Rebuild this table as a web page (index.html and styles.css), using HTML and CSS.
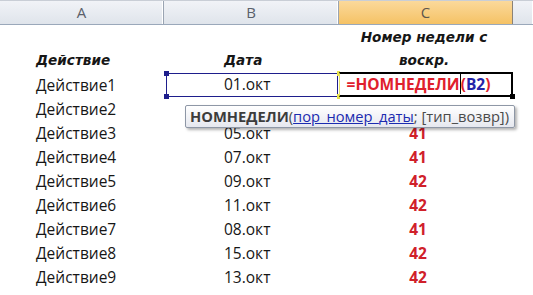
FILE: index.html
```html
<!DOCTYPE html>
<html lang="ru">
<head>
<meta charset="utf-8">
<link rel="stylesheet" href="styles.css">
</head>
<body>
<div class="wrap">
  <div class="colhead">
    <div class="ch">A</div>
    <div class="ch">B</div>
    <div class="ch ch-sel">C</div>
    <div class="ch ch-rest"></div>
  </div>
  <div class="sheet">
    <div class="cell hd hd-a">Действие</div>
    <div class="cell hd hd-b">Дата</div>
    <div class="cell hd hd-c">Номер недели с<br>воскр.</div>
    <div class="cell"></div>

    <div class="cell ca">Действие1</div>
    <div class="cell cb sel-b"><span class="h h-tl"></span><span class="h h-bl"></span><span class="h h-tr"></span><span class="h h-br"></span>01.окт</div>
    <div class="cell cc active"><span class="f-red">=НОМНЕДЕЛИ</span><span class="caret"></span><span class="f-red">(</span><span class="f-blue">B2</span><span class="f-red">)</span><span class="fill"></span></div>
    <div class="cell"></div>

    <div class="cell ca">Действие2</div>
    <div class="cell cb"></div>
    <div class="cell cc num"></div>
    <div class="cell"></div>

    <div class="cell ca">Действие3</div>
    <div class="cell cb">05.окт</div>
    <div class="cell cc num">41</div>
    <div class="cell"></div>

    <div class="cell ca">Действие4</div>
    <div class="cell cb">07.окт</div>
    <div class="cell cc num">41</div>
    <div class="cell"></div>

    <div class="cell ca">Действие5</div>
    <div class="cell cb">09.окт</div>
    <div class="cell cc num">42</div>
    <div class="cell"></div>

    <div class="cell ca">Действие6</div>
    <div class="cell cb">11.окт</div>
    <div class="cell cc num">42</div>
    <div class="cell"></div>

    <div class="cell ca">Действие7</div>
    <div class="cell cb">08.окт</div>
    <div class="cell cc num">41</div>
    <div class="cell"></div>

    <div class="cell ca">Действие8</div>
    <div class="cell cb">15.окт</div>
    <div class="cell cc num">42</div>
    <div class="cell"></div>

    <div class="cell ca">Действие9</div>
    <div class="cell cb">13.окт</div>
    <div class="cell cc num">42</div>
    <div class="cell"></div>
  </div>
  <div class="tip"><b>НОМНЕДЕЛИ</b>(<span class="tip-link">пор_номер_даты</span>; [тип_возвр])</div>
</div>
</body>
</html>
```
FILE: styles.css
```css
html, body {
  margin: 0;
  padding: 0;
  background: #ffffff;
  overflow: hidden;
}
.wrap {
  position: relative;
  width: 533px;
  height: 295px;
  font-family: "Open Sans", "Liberation Sans", sans-serif;
}
.colhead {
  display: grid;
  grid-template-columns: 164px 175px 174px 1fr;
  border-top: 1px solid #c9ced6;
  border-bottom: 1px solid #9aa8ba;
  box-sizing: border-box;
  height: 25px;
}
.ch {
  background: linear-gradient(#f1f3f7, #dfe4eb);
  border-right: 1px solid #9aa4b2;
  box-shadow: inset -1px 0 0 #ffffff;
  color: #5a606a;
  font-size: 15px;
  line-height: 23px;
  text-align: center;
}
.ch-sel {
  background: linear-gradient(#fbd99b, #f5c265);
  color: #5e564c;
  border-right: 1px solid #8a8278;
  box-shadow: none;
}
.ch-rest { border-right: none; }
.sheet {
  display: grid;
  grid-template-columns: 164px 175px 174px 1fr;
  grid-template-rows: 48px repeat(9, 24px);
}
.cell {
  position: relative;
  font-size: 15.5px;
  line-height: 24px;
  color: #161616;
  white-space: nowrap;
  box-sizing: border-box;
}
.hd {
  font-family: "DejaVu Sans", sans-serif;
  font-weight: bold;
  font-style: italic;
  font-size: 13.6px;
  line-height: 23px;
  display: flex;
  align-items: flex-end;
  padding-bottom: 1px;
}
.hd-a { padding-left: 36px; }
.hd-b { padding-left: 60px; }
.hd-c { justify-content: center; text-align: center; padding-right: 4px; }
.ca { padding-left: 36px; }
.cb { padding-left: 60px; }
.cc { text-align: center; padding-right: 16px; }
.num { color: #d0202a; font-weight: bold; }
.sel-b {
  border: 1.5px solid #1e1e8c;
  margin: 0 1px 0 2px;
  padding-left: 57px;
  line-height: 21px;
}
.h {
  position: absolute;
  width: 5px;
  height: 5px;
  background: #1e1e8c;
}
.h-tl { left: -3px; top: -3px; }
.h-bl { left: -3px; bottom: -3px; }
.h-tr { right: -3px; top: -3px; background: #e8e24a; width: 3px; }
.h-br { right: -3px; bottom: -3px; background: #e8e24a; width: 3px; }
.active {
  border: 2px solid #000000;
  border-left: 1px solid #e8e46a;
  margin-top: -1px;
  height: 25px;
  font-weight: bold;
  line-height: 21px;
  padding-right: 14px;
}
.f-red { color: #e0202c; }
.f-blue { color: #2424a8; }
.caret {
  display: inline-block;
  width: 1px;
  height: 20px;
  background: #000000;
  vertical-align: top;
}
.fill {
  position: absolute;
  right: -4px;
  bottom: -4px;
  width: 5px;
  height: 5px;
  background: #000000;
}
.tip {
  position: absolute;
  left: 185px;
  top: 105px;
  width: 330px;
  height: 23px;
  box-sizing: border-box;
  border: 1px solid #8e97a6;
  border-radius: 2px;
  background: linear-gradient(#ffffff, #e6e8ef);
  box-shadow: 2px 2px 3px rgba(0, 0, 0, 0.3);
  font-family: "Open Sans", "Liberation Sans", sans-serif;
  font-size: 14.7px;
  line-height: 21px;
  padding-left: 4px;
  color: #4a4a4a;
  white-space: nowrap;
}
.tip b { color: #3c3c3c; }
.tip-link { color: #1b2bb0; text-decoration: underline; }
```
